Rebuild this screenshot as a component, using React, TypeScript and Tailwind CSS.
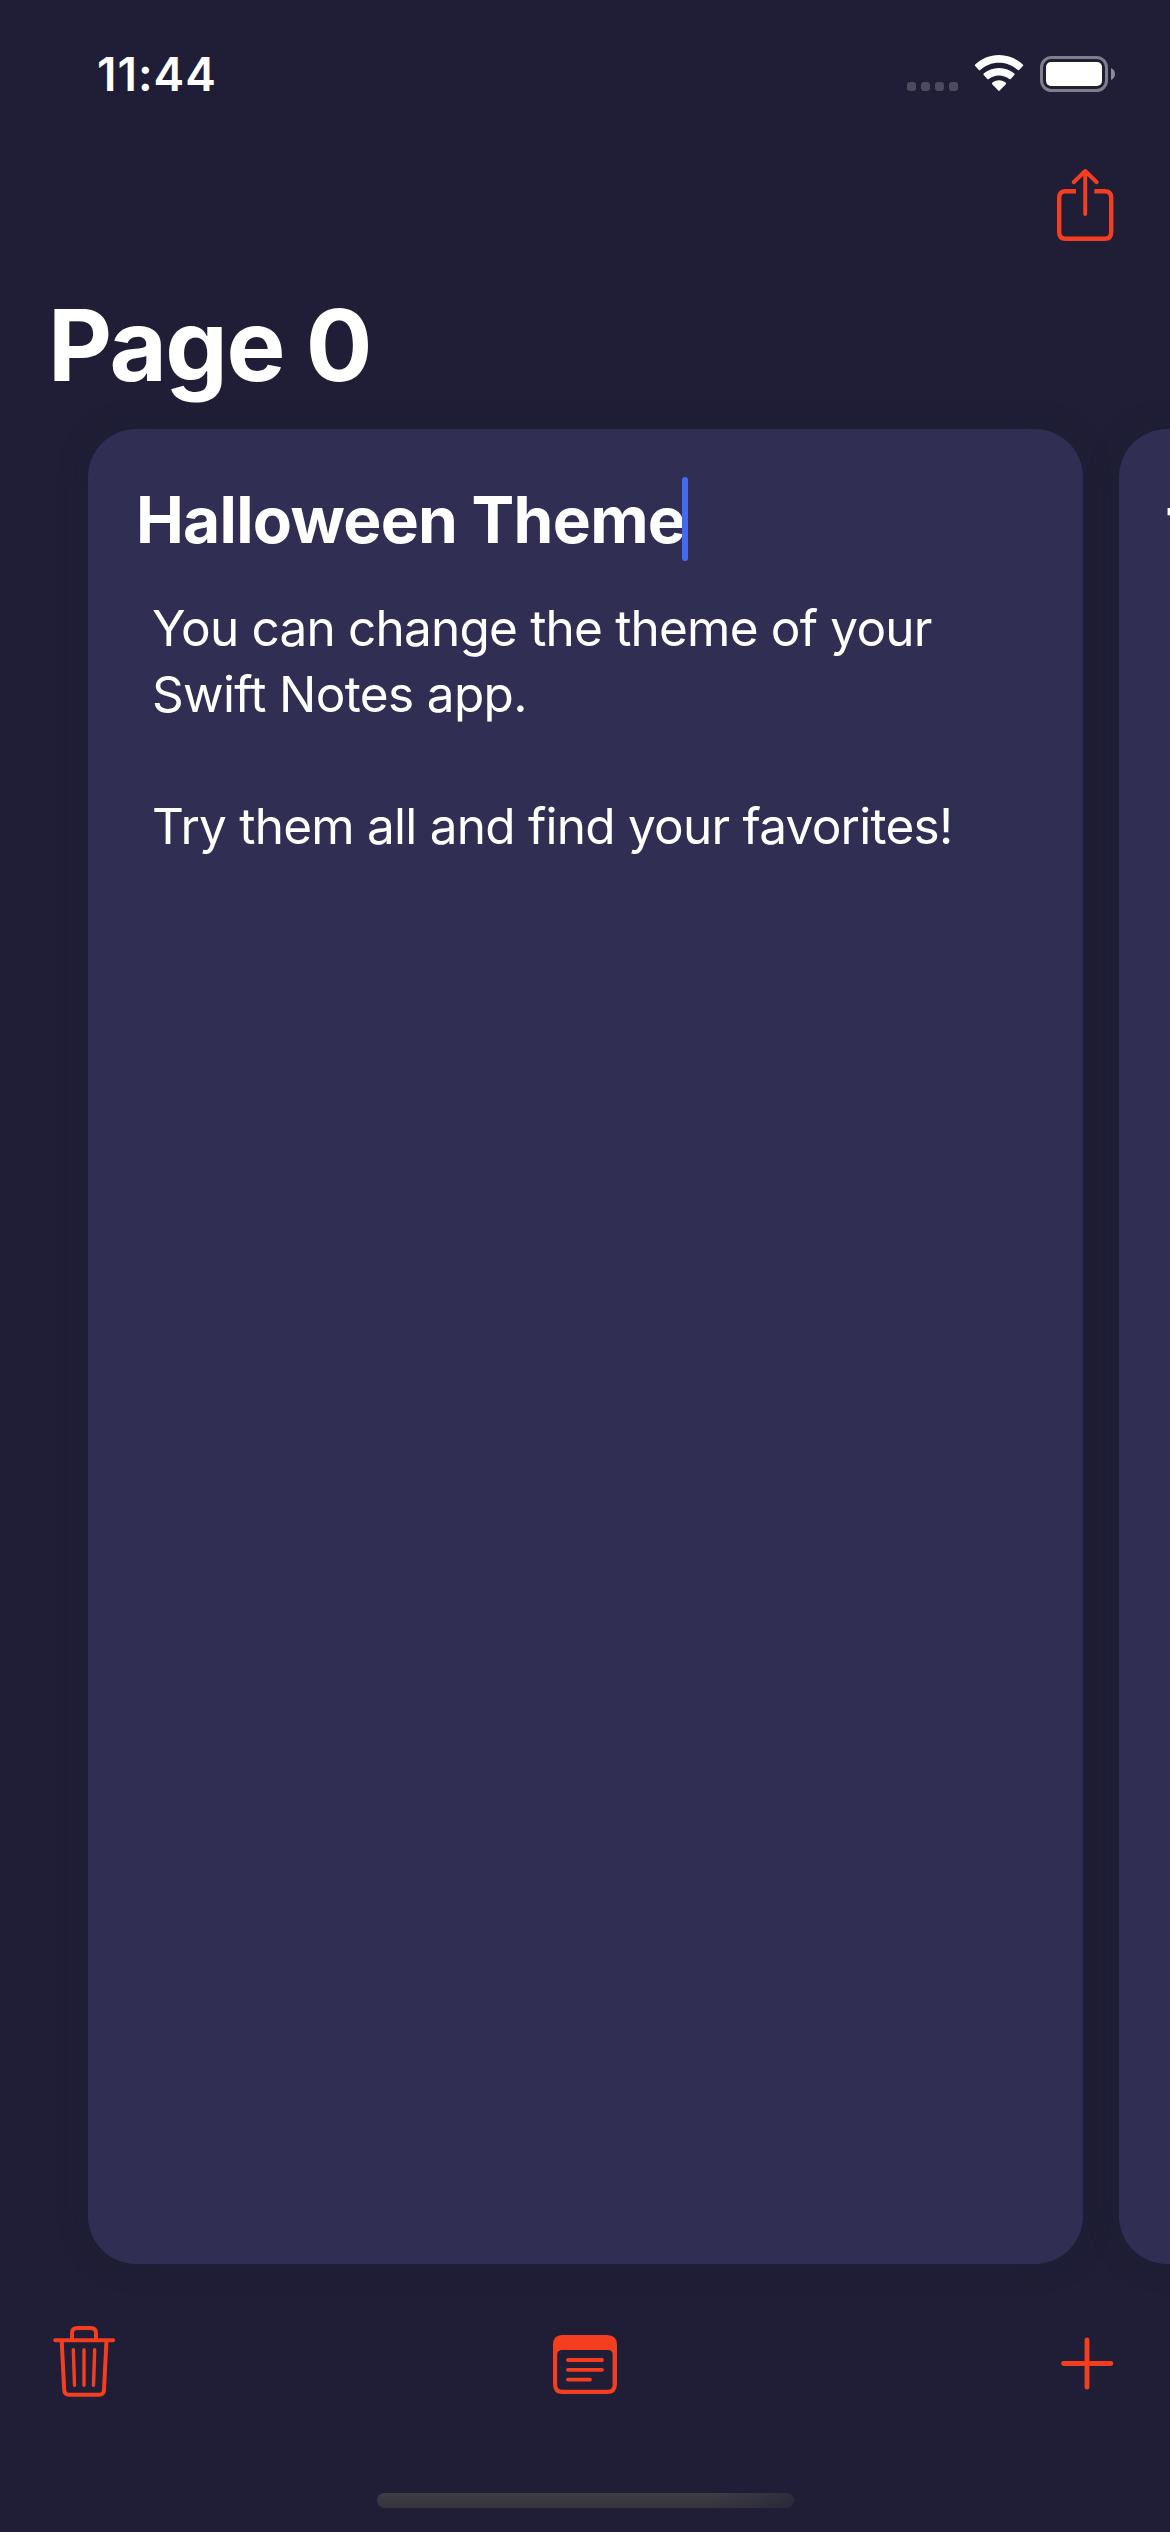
import type { ReactNode } from "react";

function StatusBar() {
  return (
    <header className="flex h-[140px] shrink-0 items-start justify-between pl-[97px] pr-[54px]">
      <time className="mt-11 text-[46px] font-semibold leading-[60px] tracking-[1px]">11:44</time>
      <div className="mt-[54px] flex items-start">
        <div className="mr-[16px] mt-7 flex gap-[5px]">
          <i className="size-[9px] rounded-[3px] bg-white/20" />
          <i className="size-[9px] rounded-[3px] bg-white/20" />
          <i className="size-[9px] rounded-[3px] bg-white/20" />
          <i className="size-[9px] rounded-[3px] bg-white/20" />
        </div>
        <svg className="h-[38px] w-[50px]" viewBox="0 0 50 38" fill="white">
          <path d="M25 1C34.200 1 42.600 4.600 48.800 10.500Q49.500 11.200 48.800 12L45.200 16Q44.500 16.700 43.800 16C38.800 11.400 32.300 8.700 25 8.700S11.200 11.400 6.200 16Q5.500 16.700 4.800 16L1.200 12Q0.500 11.200 1.200 10.500C7.400 4.600 15.800 1 25 1Z" />
          <path d="M25 13.900C30.900 13.900 36.200 16 40.300 19.600Q41 20.200 40.300 21L36.700 25Q36 25.700 35.200 25C32.400 22.700 28.900 21.400 25 21.400S17.600 22.700 14.800 25Q14 25.700 13.300 25L9.700 21Q9 20.200 9.700 19.600C13.800 16 19.100 13.900 25 13.900Z" />
          <path d="M25 26.200C27.700 26.200 30 27.200 31.800 28.800Q32.500 29.500 31.800 30.200L25.700 36.600Q25 37.300 24.300 36.600L18.200 30.200Q17.500 29.500 18.200 28.800C20 27.200 22.300 26.200 25 26.200Z" />
        </svg>
        <svg className="ml-4 h-[38px] w-[76px]" viewBox="0 0 76 38">
          <rect x="1.500" y="3.500" width="65" height="33" rx="10" fill="none" stroke="#7f7e8b" strokeWidth="3" />
          <rect x="6" y="8" width="56" height="24" rx="5" fill="white" />
          <path d="M71 14Q75 16 75 20T71 26Z" fill="#8c8b98" />
        </svg>
      </div>
    </header>
  );
}

function ShareIcon() {
  return (
    <svg className="h-[76px] w-[60px]" viewBox="0 0 60 76" fill="none" stroke="currentColor" strokeWidth="4.400">
      <path d="M21 24.200H10.700C6.500 24.200 4.200 26.500 4.200 30.700V65.300C4.200 69.500 6.500 71.800 10.700 71.800H49.700C53.900 71.800 56.200 69.500 56.200 65.300V30.700C56.200 26.500 53.900 24.200 49.700 24.200H39.300" />
      <path d="M30.200 47V4.500M18.700 15.200L30.200 4L41.700 15.200" strokeLinecap="round" strokeLinejoin="round" strokeWidth="4" />
    </svg>
  );
}

function TrashIcon() {
  return (
    <svg className="h-[76px] w-[66px]" viewBox="0 0 66 76" fill="none" stroke="currentColor" strokeWidth="4" strokeLinecap="round" strokeLinejoin="round">
      <path d="M4.200 18.200H62" />
      <path d="M21 18V11Q21 6 26.500 6H39.500Q45 6 45 11V18" strokeLinecap="butt" />
      <path d="M10.700 18.500L13.200 68Q13.500 72.800 18.300 72.800H47.900Q52.700 72.800 53 68L55.500 18.500" strokeLinecap="butt" />
      <path d="M22.300 27.800L23.500 63.300M33 27.800V63.300M43.700 27.800L42.500 63.300" strokeWidth="3.400" />
    </svg>
  );
}

function NoteIcon() {
  return (
    <svg className="h-[60px] w-[66px]" viewBox="0 0 66 60">
      <path fill="currentColor" fillRule="evenodd" d="M10 0H55Q65 0 65 10V49Q65 59 55 59H10Q1 59 1 49V10Q1 0 10 0ZM10.500 15Q5.200 15 5.200 19.500V50Q5.200 54.800 10.500 54.800H55.500Q60.600 54.800 60.600 50V19.500Q60.600 15 55.500 15Z" />
      <path d="M16 25H50M16 34.800H50M16 44.600H38" fill="none" stroke="currentColor" strokeWidth="3.800" strokeLinecap="round" />
    </svg>
  );
}

function PlusIcon() {
  return (
    <svg className="size-[54px]" viewBox="0 0 54 54" fill="none" stroke="currentColor" strokeWidth="4.800" strokeLinecap="round">
      <path d="M27 3.800V51.200M3.500 27.500H50.900" />
    </svg>
  );
}

function NoteCard({ title, active, children }: { title: string; active?: boolean; children?: ReactNode }) {
  return (
    <article className="h-full w-[995px] shrink-0 rounded-[48px] bg-[#312e54] pl-12 pt-12 shadow-[0_0_30px_rgba(28,34,44,0.25)]">
      <h2 className="flex h-[84px] text-[64px] font-bold leading-[86px] tracking-[-0.72px]">
        <span>{title}</span>
        {active && <span className="-ml-[3px] h-[84px] w-[6px] rounded-[3px] bg-[#426bf2]" />}
      </h2>
      <div className="ml-4 mt-[34px] text-[49.5px] leading-[66px]">{children}</div>
    </article>
  );
}

export default function App() {
  return (
    <div className="flex h-[2532px] w-[1170px] flex-col overflow-hidden bg-[#1f1e36] font-['Inter',sans-serif] text-white">
      <StatusBar />
      <nav className="flex h-[145px] shrink-0 justify-end pr-[55px] pt-[27px] text-[#f43e1f]">
        <button className="h-[76px]" aria-label="Share"><ShareIcon /></button>
      </nav>
      <h1 className="h-36 shrink-0 pl-12 text-[99px] font-bold leading-[120px] tracking-[-1.5px]">Page 0</h1>
      <main className="flex h-[1835px] shrink-0 gap-9 pl-[88px]">
        <NoteCard title="Halloween Theme" active>
          <p className="tracking-[-0.8px]">You can change the theme of your</p>
          <p className="tracking-[-0.65px]">Swift Notes app.</p>
          <p className="mt-[66px] tracking-[-0.76px]">Try them all and find your favorites!</p>
        </NoteCard>
        <NoteCard title="t" />
      </main>
      <footer className="flex h-[229px] shrink-0 items-start justify-between pl-[51px] pr-[56px] pt-[58px] text-[#f43e1f]">
        <button className="h-[76px] w-[205px]" aria-label="Delete"><TrashIcon /></button>
        <button className="mt-[13px] flex h-[60px] w-[200px] justify-center" aria-label="Pages"><NoteIcon /></button>
        <button className="mt-[14px] flex h-[54px] w-[200px] justify-end" aria-label="Add"><PlusIcon /></button>
      </footer>
      <div className="flex shrink-0 justify-center">
        <div className="h-[15px] w-[417px] overflow-hidden rounded-full bg-linear-to-b from-[#3e3d44] to-[#35343e]">
          <div className="ml-auto h-full w-[80px] bg-linear-to-r from-transparent to-[#1f1e35]/50" />
        </div>
      </div>
    </div>
  );
}
